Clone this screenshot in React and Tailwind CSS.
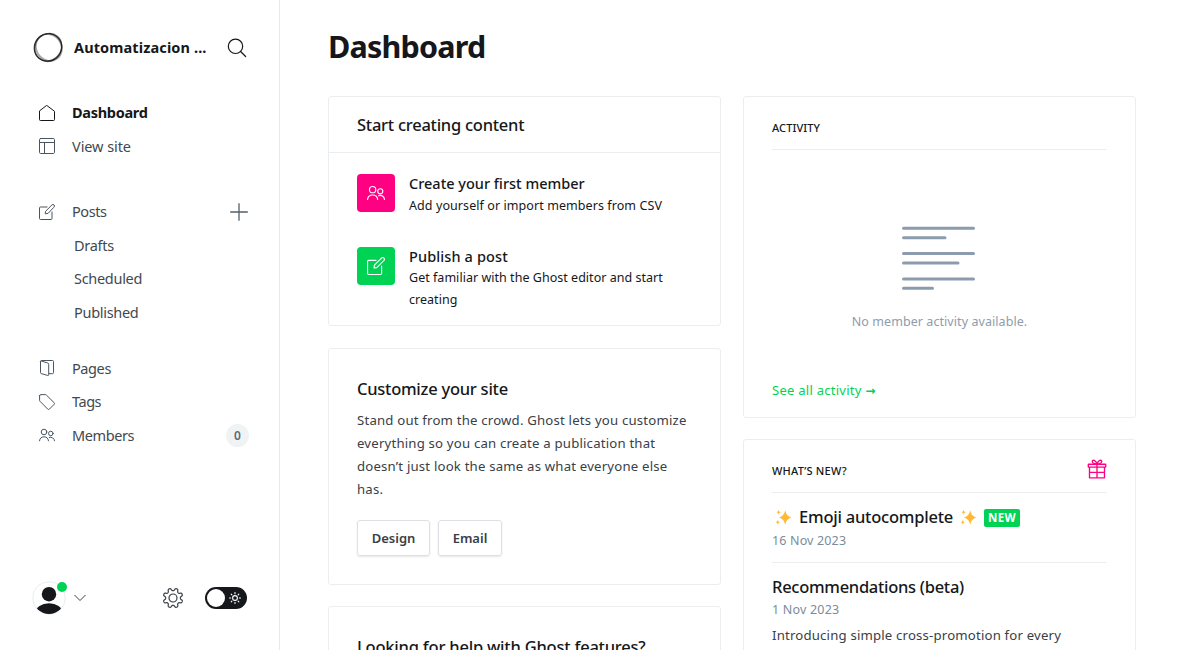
const stroke = {
  fill: "none",
  stroke: "currentColor",
  strokeLinecap: "round",
  strokeLinejoin: "round",
};

function HomeIcon() {
  return (
    <svg width="16" height="16" viewBox="0 0 16 16" {...stroke}>
      <path d="M.5 6.3V14.600a.9.9 0 0 0 .9.900h13.200a.9.9 0 0 0 .9-.9V6.300L8 .6z" />
    </svg>
  );
}

function LayoutIcon() {
  return (
    <svg width="16" height="16" viewBox="0 0 16 16" {...stroke}>
      <rect x=".5" y=".5" width="15" height="15" rx="1.2" />
      <path d="M.5 4.500h15M5.500 4.500v11" />
    </svg>
  );
}

function PencilIcon({ size = 16 }) {
  return (
    <svg width={size} height={size} viewBox="0 0 24 24" {...stroke} strokeWidth="1.5">
      <path d="M12 4.500H2.250A1.500 1.500 0 0 0 .750 6v15.750a1.500 1.500 0 0 0 1.500 1.500H18a1.500 1.500 0 0 0 1.500-1.500V12" />
      <path d="M13.045 14.136l-3.712.531.530-3.713 9.546-9.546A2.250 2.250 0 0 1 22.591 4.590z" />
    </svg>
  );
}

function PagesIcon() {
  return (
    <svg width="16" height="16" viewBox="0 0 16 16" {...stroke}>
      <path d="M1.500 1.300v11.400a.9.9 0 0 0 .6.850l6.600 1.900a.8.8 0 0 0 1-.8V4.200a1.200 1.200 0 0 0-.9-1.150L2.500 1.100A.8.8 0 0 0 1.500 1.300z" />
      <path d="M2 .8A.9.9 0 0 1 2.500.5h11a1 1 0 0 1 1 1v11.200a1 1 0 0 1-1 1H9.800" />
    </svg>
  );
}

function TagIcon() {
  return (
    <svg width="16" height="16" viewBox="0 0 16 16" {...stroke}>
      <path d="M.6 1.800v4.300a2 2 0 0 0 .6 1.400l7.500 7.600a1.200 1.200 0 0 0 1.700 0l4.700-4.700a1.200 1.200 0 0 0 0-1.700L7.500 1.200A2 2 0 0 0 6.100.6H1.800A1.200 1.200 0 0 0 .6 1.800z" />
    </svg>
  );
}

function MembersIcon({ size = 16 }) {
  return (
    <svg width={size} height={size} viewBox="0 0 24 24" {...stroke} strokeWidth="1.5">
      <circle cx="7.500" cy="7.500" r="4.200" />
      <path d="M.750 20.700a6.800 6.800 0 0 1 13.500 0" />
      <circle cx="17.700" cy="9.700" r="3.400" />
      <path d="M15.400 15.700a5.600 5.600 0 0 1 7.900 5" />
    </svg>
  );
}

function SearchIcon() {
  return (
    <svg width="20" height="20" viewBox="0 0 20 20" {...stroke} strokeWidth="1.200">
      <circle cx="8.500" cy="8.300" r="7.200" />
      <path d="M13.600 13.500l5 5" />
    </svg>
  );
}

function GiftIcon() {
  return (
    <svg width="20" height="20" viewBox="0 0 20 20" {...stroke} strokeWidth="1.350" strokeLinecap="butt" className="text-[#ff0083]">
      <rect x="1.300" y="5.200" width="17.400" height="2.900" rx=".4" />
      <path d="M2.500 8.100v10.700h15V8.100M10 5.200v13.600M2.500 13.400h15" />
      <path d="M10 5.100C7.500 4.900 5.100 4 5.300 2.300 5.600.4 8.800.8 10 5.100zM10 5.100c2.500-.2 4.900-1.100 4.700-2.800C14.400.4 11.200.8 10 5.100z" />
    </svg>
  );
}

const GEAR = (() => {
  const points = [];
  for (let i = 0; i <= 160; i += 1) {
    const a = (i / 160) * Math.PI * 2;
    const wave = Math.cos(8 * a + Math.PI);
    const r = 8.600 + 1.300 * Math.tanh(1.900 * wave);
    points.push(`${(11 + r * Math.cos(a)).toFixed(2)} ${(11 + r * Math.sin(a)).toFixed(2)}`);
  }
  return `M${points.join("L")}Z`;
})();

function GearIcon() {
  return (
    <svg width="22" height="22" viewBox="0 0 22 22" {...stroke} strokeWidth="1.200">
      <path d={GEAR} />
      <circle cx="11" cy="11" r="4" />
    </svg>
  );
}

function SunIcon() {
  return (
    <svg width="12" height="12" viewBox="0 0 12 12" {...stroke} strokeWidth="1.100" className="text-white">
      <circle cx="6" cy="6" r="2.400" />
      <path d="M6 .5v1.200M6 10.300v1.200M.5 6h1.200M10.300 6h1.200M2.200 2.200l.7.7M9.100 9.100l.7.7M2.200 9.800l.7-.7M9.100 2.900l.7-.7" />
    </svg>
  );
}

function Logo() {
  return (
    <svg width="32" height="32" viewBox="0 0 32 32" fill="none" stroke="#15171a">
      <ellipse cx="15.700" cy="16.300" rx="14" ry="13.500" strokeWidth="1.100" opacity=".8" transform="rotate(-40 16 16)" />
      <ellipse cx="16.800" cy="15.600" rx="13.900" ry="12.600" strokeWidth="1.900" opacity=".38" transform="rotate(55 16 16)" />
      <ellipse cx="16" cy="16.300" rx="14.400" ry="12.900" strokeWidth="1.200" opacity=".55" transform="rotate(-50 16 16)" />
      <ellipse cx="16.300" cy="16.600" rx="13.300" ry="14" strokeWidth="1.100" opacity=".4" transform="rotate(25 16 16)" />
    </svg>
  );
}

function Avatar() {
  return (
    <svg width="34" height="34" viewBox="0 0 34 34">
      <defs>
        <clipPath id="avatar">
          <circle cx="17" cy="17" r="16" />
        </clipPath>
      </defs>
      <circle cx="17" cy="17" r="16.300" fill="#fff" stroke="#e6e9eb" strokeWidth=".9" />
      <g fill="#15171a" clipPath="url(#avatar)">
        <circle cx="17" cy="13.200" r="7.200" />
        <ellipse cx="17" cy="32" rx="13.500" ry="9.800" />
      </g>
    </svg>
  );
}

function ListGraphic() {
  return (
    <svg width="74" height="66" viewBox="0 0 74 66" stroke="#8b9cae" strokeWidth="3" strokeLinecap="round">
      <path d="M1.500 3.200h70M1.500 12.700h41.500M1.500 28.500h70M1.500 38h54.500M1.500 54h70M1.500 63.300h29" />
    </svg>
  );
}

function Sparkles() {
  return (
    <svg width="17" height="17" viewBox="0 0 17 17" fill="#ffb935" role="img" aria-label="✨">
      <path d="M10.200 1c.9 4.300 2 6 6.300 7.500-4.300 1.500-5.400 3.200-6.300 7.500-.9-4.300-2-6-6.300-7.500C8.200 7 9.300 5.300 10.200 1z" />
      <path d="M3.600.8c.4 1.600.8 2.100 2.300 2.500-1.500.4-1.900.9-2.300 2.500-.4-1.600-.8-2.100-2.300-2.500C2.800 2.900 3.200 2.400 3.600.8zM2.800 10.800c.4 1.600.8 2.100 2.300 2.500-1.500.4-1.900.9-2.300 2.500-.4-1.600-.8-2.100-2.300-2.500 1.500-.4 1.900-.9 2.300-2.500z" />
    </svg>
  );
}

function NavItem({ icon, label, active, children, tracking }) {
  return (
    <div className="flex h-[33.5px] items-center pl-[39px] pr-[30px]">
      <span className={active ? "mr-[17px] text-[#15171a]" : "mr-[17px] text-[#4a5560]"}>{icon}</span>
      <span
        className={`flex-1 pt-[0.9px] text-[14.5px] ${tracking} ${active ? "font-bold text-[#15171a]" : "text-[#414950]"}`}
      >
        {label}
      </span>
      {children}
    </div>
  );
}

function SubItem({ label }) {
  return (
    <div className="flex h-[33.5px] items-center pl-[74px] pt-[0.9px] text-[14.5px] tracking-[-0.3px] text-[#414950]">
      {label}
    </div>
  );
}

function Sidebar() {
  return (
    <aside className="flex h-full w-[280px] shrink-0 flex-col border-r border-[#e6e9eb]">
      <div className="flex items-center pl-8 pr-8 pt-[31px]">
        <Logo />
        <span className="ml-[10px] flex-1 whitespace-nowrap text-[14.5px] font-bold leading-8 tracking-[0.12px]">
          Automatizacion ...
        </span>
        <span className="pt-[2px]">
          <SearchIcon />
        </span>
      </div>
      <nav className="mt-[33px] flex flex-col">
        <NavItem icon={<HomeIcon />} label="Dashboard" tracking="tracking-[-0.3px]" active />
        <NavItem icon={<LayoutIcon />} label="View site" tracking="tracking-[-0.07px]" />
        <div className="h-8" />
        <NavItem icon={<PencilIcon />} label="Posts" tracking="tracking-[-0.45px]">
          <svg width="18" height="18" viewBox="0 0 18 18" stroke="#54606b" strokeWidth="1.300" className="mr-px">
            <path d="M9 .2v17.600M.2 9h17.600" />
          </svg>
        </NavItem>
        <SubItem label="Drafts" />
        <SubItem label="Scheduled" />
        <SubItem label="Published" />
        <div className="h-[22.5px]" />
        <NavItem icon={<PagesIcon />} label="Pages" tracking="tracking-[-0.4px]" />
        <NavItem icon={<TagIcon />} label="Tags" tracking="tracking-[-0.45px]" />
        <NavItem icon={<MembersIcon />} label="Members" tracking="tracking-[-0.4px]">
          <span className="flex size-[23px] items-center justify-center rounded-full bg-[#eff3f4] pt-px text-xs font-semibold text-[#5d6b79]">
            0
          </span>
        </NavItem>
      </nav>
      <div className="mt-auto flex items-center pb-[35px] pl-8">
        <div className="relative size-[34px]">
          <Avatar />
          <span className="absolute right-[-1px] top-px size-[10px] rounded-full bg-[#00d353]" />
        </div>
        <svg width="12" height="8" viewBox="0 0 12 8" {...stroke} className="ml-2 text-[#394047]">
          <path d="M.8 1.300L6 6.500l5.200-5.200" />
        </svg>
        <span className="ml-[76px] text-[#394047]">
          <GearIcon />
        </span>
        <div className="ml-[21px] flex h-[22px] w-[42px] items-center justify-between rounded-full bg-[#15171a] pl-[2px] pr-[6px]">
          <span className="size-[18px] rounded-full bg-white" />
          <SunIcon />
        </div>
      </div>
    </aside>
  );
}

function Card({ className = "", children }) {
  return <section className={`rounded-[3px] border border-[#ebeef0] ${className}`}>{children}</section>;
}

function Step({ icon, color, title, children }) {
  return (
    <div className="flex h-[42px] px-7">
      <span className={`flex size-[38px] shrink-0 items-center justify-center rounded text-white ${color}`}>{icon}</span>
      <div className="-mt-px ml-[14px]">
        <div className="text-[14.5px] font-medium leading-5">{title}</div>
        <div className="text-[12.5px] leading-[22px]">{children}</div>
      </div>
    </div>
  );
}

function OutlineButton({ children, className }) {
  return (
    <button
      className={`flex h-[36px] items-center justify-center rounded-[3px] border border-[#dde1e5] pt-[2px] text-[13px] font-semibold text-[#394047] shadow-[0_1px_2px_rgba(0,0,0,0.1)] ${className}`}
    >
      {children}
    </button>
  );
}

function LeftColumn() {
  return (
    <div className="flex w-[393px] flex-col">
      <Card className="h-[230px]">
        <h2 className="flex h-[56px] items-center border-b border-[#ebeef0] px-7 pt-[2px] text-[16.5px] font-medium tracking-[-0.25px]">
          Start creating content
        </h2>
        <div className="h-[21px]" />
        <Step icon={<MembersIcon size={18} />} color="bg-[#ff0083]" title={<span className="tracking-[0px]">Create your first member</span>}>
          <div className="pt-[2px] tracking-[0.08px]">Add yourself or import members from CSV</div>
        </Step>
        <div className="h-[31px]" />
        <Step icon={<PencilIcon size={18} />} color="bg-[#00d353]" title={<span className="tracking-[0.12px]">Publish a post</span>}>
          <div className="pt-px tracking-[0.03px]">
            Get familiar with the Ghost editor and start
            <br />
            creating
          </div>
        </Step>
      </Card>
      <Card className="mt-[22px] h-[237px] px-7 pt-[28px]">
        <h2 className="text-[16.5px] font-medium leading-6 tracking-[-0.25px]">Customize your site</h2>
        <p className="mt-2 whitespace-nowrap text-[13.2px] leading-[23px] tracking-[0.19px] text-[#394047]">
          Stand out from the crowd. Ghost lets you customize
          <br />
          everything so you can create a publication that
          <br />
          doesn’t just look the same as what everyone else
          <br />
          has.
        </p>
        <div className="mt-[19px] flex gap-2">
          <OutlineButton className="w-[73px]">Design</OutlineButton>
          <OutlineButton className="w-[64px]">Email</OutlineButton>
        </div>
      </Card>
      <Card className="mt-[21px] h-[237px] px-7 pt-[28px]">
        <h2 className="text-[16.5px] font-medium leading-6 tracking-[-0.21px]">Looking for help with Ghost features?</h2>
      </Card>
    </div>
  );
}

function RightColumn() {
  return (
    <div className="ml-[22px] flex w-[393px] flex-col">
      <Card className="h-[322px] px-7">
        <h3 className="flex h-[53px] items-center border-b border-[#ebeef0] pt-[10px] text-[11px] font-medium tracking-[0.1px]">
          ACTIVITY
        </h3>
        <div className="flex flex-col items-center pt-[75px]">
          <div className="pr-px">
            <ListGraphic />
          </div>
          <p className="mt-5 text-[12.5px] leading-[22px] tracking-[0.07px] text-[#8e9cac]">No member activity available.</p>
        </div>
        <a className="mt-[47px] block text-[13px] leading-5 tracking-[0.26px] text-[#00d353]">
          See all activity <span className="font-['DejaVu_Sans'] font-bold text-[12px]">→</span>
        </a>
      </Card>
      <Card className="mt-[21px] h-[260px] px-7">
        <div className="flex h-[53px] items-center justify-between border-b border-[#ebeef0] pt-[10px]">
          <h3 className="text-[11px] font-medium tracking-[0.24px]">WHAT’S NEW?</h3>
          <span className="pb-[5px]">
            <GiftIcon />
          </span>
        </div>
        <article className="h-[70px] border-b border-[#ebeef0] pt-[12px]">
          <h2 className="flex items-center whitespace-nowrap text-[16.5px] font-medium leading-6 tracking-[-0.22px]">
            <span className="flex w-[27px] pl-[3px]">
              <Sparkles />
            </span>
            <span className="w-[155px]">Emoji autocomplete</span>
            <span className="flex w-[30px] pl-[6px]">
              <Sparkles />
            </span>
            <span className="mt-[2px] flex h-[18px] w-9 items-center justify-center rounded-[2px] bg-[#00d353] text-[11.5px] font-bold leading-none tracking-[0.4px] text-white">
              NEW
            </span>
          </h2>
          <p className="pt-px text-[12.5px] leading-[22px] tracking-[0.15px] text-[#7c8b9a]">16 Nov 2023</p>
        </article>
        <article className="pt-3">
          <h2 className="text-[16.5px] font-medium leading-6 tracking-[-0.28px]">Recommendations (beta)</h2>
          <p className="text-[12.5px] leading-[22px] tracking-[0.2px] text-[#7c8b9a]">1 Nov 2023</p>
          <p className="mt-[3px] whitespace-nowrap text-[13.2px] leading-[23px] tracking-[0.18px] text-[#394047]">
            Introducing simple cross-promotion for every
          </p>
        </article>
      </Card>
    </div>
  );
}

export default function App() {
  return (
    <div className="flex h-[650px] w-[1184px] overflow-hidden bg-white font-['Noto_Sans','Open_Sans',sans-serif] text-[#15171a]">
      <Sidebar />
      <main className="flex-1 overflow-hidden pl-12 pt-6">
        <h1 className="text-[30.5px] font-bold leading-[44px] tracking-[-0.8px]">Dashboard</h1>
        <div className="mt-7 flex">
          <LeftColumn />
          <RightColumn />
        </div>
      </main>
    </div>
  );
}
